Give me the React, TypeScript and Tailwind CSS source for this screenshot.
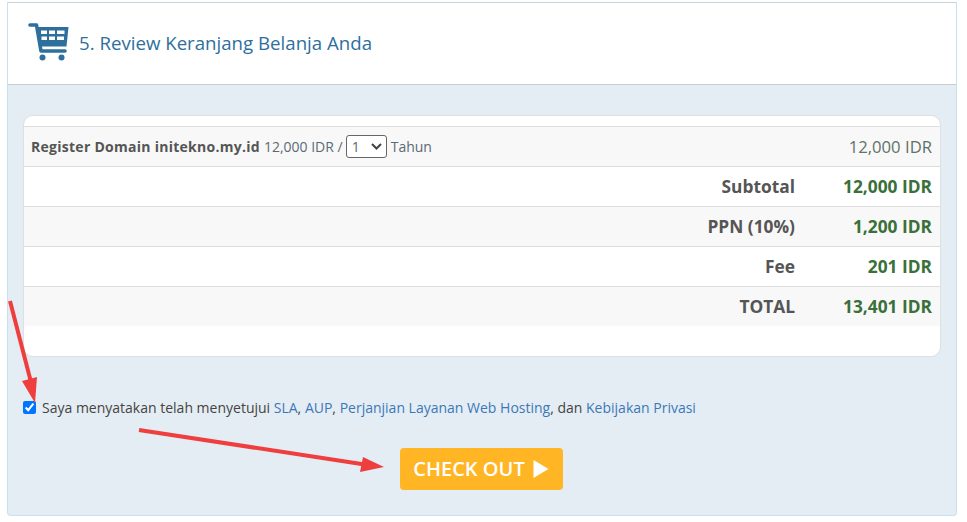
const summaryRows = [
  { label: "Subtotal", value: "12,000 IDR", shaded: false },
  { label: "PPN (10%)", value: "1,200 IDR", shaded: true },
  { label: "Fee", value: "201 IDR", shaded: false },
  { label: "TOTAL", value: "13,401 IDR", shaded: true },
]

function CartIcon() {
  return (
    <svg width="41" height="38" viewBox="0 0 41 38" className="shrink-0 mb-[3px]">
      <path d="M2 2 H8.5 L13 28 H37" fill="none" stroke="#2e6f9e" strokeWidth="3.6" strokeLinecap="round" strokeLinejoin="round" />
      <path fillRule="evenodd" fill="#2e6f9e" d="M8 4 H40.5 L38.5 23.5 H11 Z M13 7.5 V11 H19 V7.5 Z M21 7.5 V11 H27 V7.5 Z M29 7.5 V11 H36.5 V7.5 Z M13.5 13.5 V17 H19 V13.5 Z M21 13.5 V17 H27 V13.5 Z M29 13.5 V17 H36 V13.5 Z" />
      <circle cx="14.5" cy="34.5" r="3" fill="#2e6f9e" />
      <circle cx="33.5" cy="34.5" r="3" fill="#2e6f9e" />
    </svg>
  )
}

function Arrows() {
  return (
    <svg width="967" height="522" viewBox="0 0 967 522" className="absolute left-0 top-0 pointer-events-none">
      <path d="M10 301 L32 386" stroke="#ef3e3e" strokeWidth="4" fill="none" />
      <path d="M35 403 L22 381 L37 377 Z" fill="#ef3e3e" />
      <path d="M139 430 L368 465" stroke="#ef3e3e" strokeWidth="4" fill="none" />
      <path d="M384 467 L363 457 L360 472 Z" fill="#ef3e3e" />
    </svg>
  )
}

export default function App() {
  return (
    <div className="relative w-[967px] h-[522px] overflow-hidden bg-white font-['Open_Sans',sans-serif] text-[14px] text-[#444444]">
      <div className="ml-[7px] mr-[10px] mt-[2px] h-[514px] flex flex-col border-x border-b border-[#c5e3ea] rounded-b-[4px] bg-[#e4edf3]">
        {/* Section heading */}
        <div className="h-[83px] shrink-0 flex items-center gap-[10px] pl-[20px] pb-[1px] bg-white border-y border-[#c6cdd2] border-t-[#c6d3d8]">
          <CartIcon />
          <h2 className="text-[18.67px] font-normal text-[#2e6f9e]">5. Review Keranjang Belanja Anda</h2>
        </div>

        <div className="flex-1 flex flex-col pt-[30px] px-[15px]">
          {/* Cart table */}
          <div className="w-[918px] h-[242px] pt-[10px] rounded-[10px] bg-white border border-[#dde1e4]">
            <div className="h-[41px] flex items-center justify-between pl-[7px] pr-[8px] bg-[#f8f8f8] border-y border-[#dddddd]">
              <div className="flex items-center">
                <strong className="font-bold tracking-[0.27px] text-[#555555]">Register Domain initekno.my.id</strong>
                <span className="ml-[4px] text-[#5a6a75]">12,000 IDR /</span>
                <div className="ml-[3px] w-[41px] h-[23px] flex items-center justify-between pl-[5px] pr-[4px] bg-white border border-[#666666] rounded-[3px] text-[#5a6a75]">
                  <span>1</span>
                  <svg width="11" height="7" viewBox="0 0 11 7">
                    <path d="M1 1 L5.5 5.5 L10 1" fill="none" stroke="#444444" strokeWidth="2" />
                  </svg>
                </div>
                <span className="ml-[4px] text-[#5a6a75]">Tahun</span>
              </div>
              <span className="text-[16.67px] text-[#5f7266]">12,000 IDR</span>
            </div>

            {summaryRows.map((row) => (
              <div
                key={row.label}
                className={`h-[40px] last:h-[39px] flex items-center justify-end pt-[1px] pr-[8px] border-b border-[#dddddd] last:border-b-0 text-[17.33px] font-bold ${row.shaded ? "bg-[#f8f8f8]" : "bg-white"}`}
              >
                <span className="text-[#555555]">{row.label}</span>
                <span className="w-[137px] text-right text-[#3a7039]">{row.value}</span>
              </div>
            ))}
          </div>

          {/* Agreement */}
          <label className="mt-[40px] flex items-center text-[14px] text-[#444444]">
            <input type="checkbox" defaultChecked className="w-[13px] h-[13px] m-0 accent-[#0075ff]" />
            <span className="ml-[6px]">
              Saya menyatakan telah menyetujui{" "}
              <a className="text-[#3c78b8]">SLA</a>, <a className="text-[#3c78b8]">AUP</a>,{" "}
              <a className="text-[#3c78b8]">Perjanjian Layanan Web Hosting</a>, dan{" "}
              <a className="text-[#3c78b8]">Kebijakan Privasi</a>
            </span>
          </label>

          <div className="mt-[30px] flex justify-center pr-[2px]">
            <button className="w-[163px] h-[42px] flex items-center justify-center gap-[8px] rounded-[4px] bg-[#ffb524] text-white text-[20px] font-semibold">
              CHECK OUT
              <svg width="16" height="18" viewBox="0 0 16 18">
                <path d="M0.5 0 L15.5 9 L0.5 18 Z" fill="#ffffff" />
              </svg>
            </button>
          </div>
        </div>
      </div>
      <Arrows />
    </div>
  )
}
